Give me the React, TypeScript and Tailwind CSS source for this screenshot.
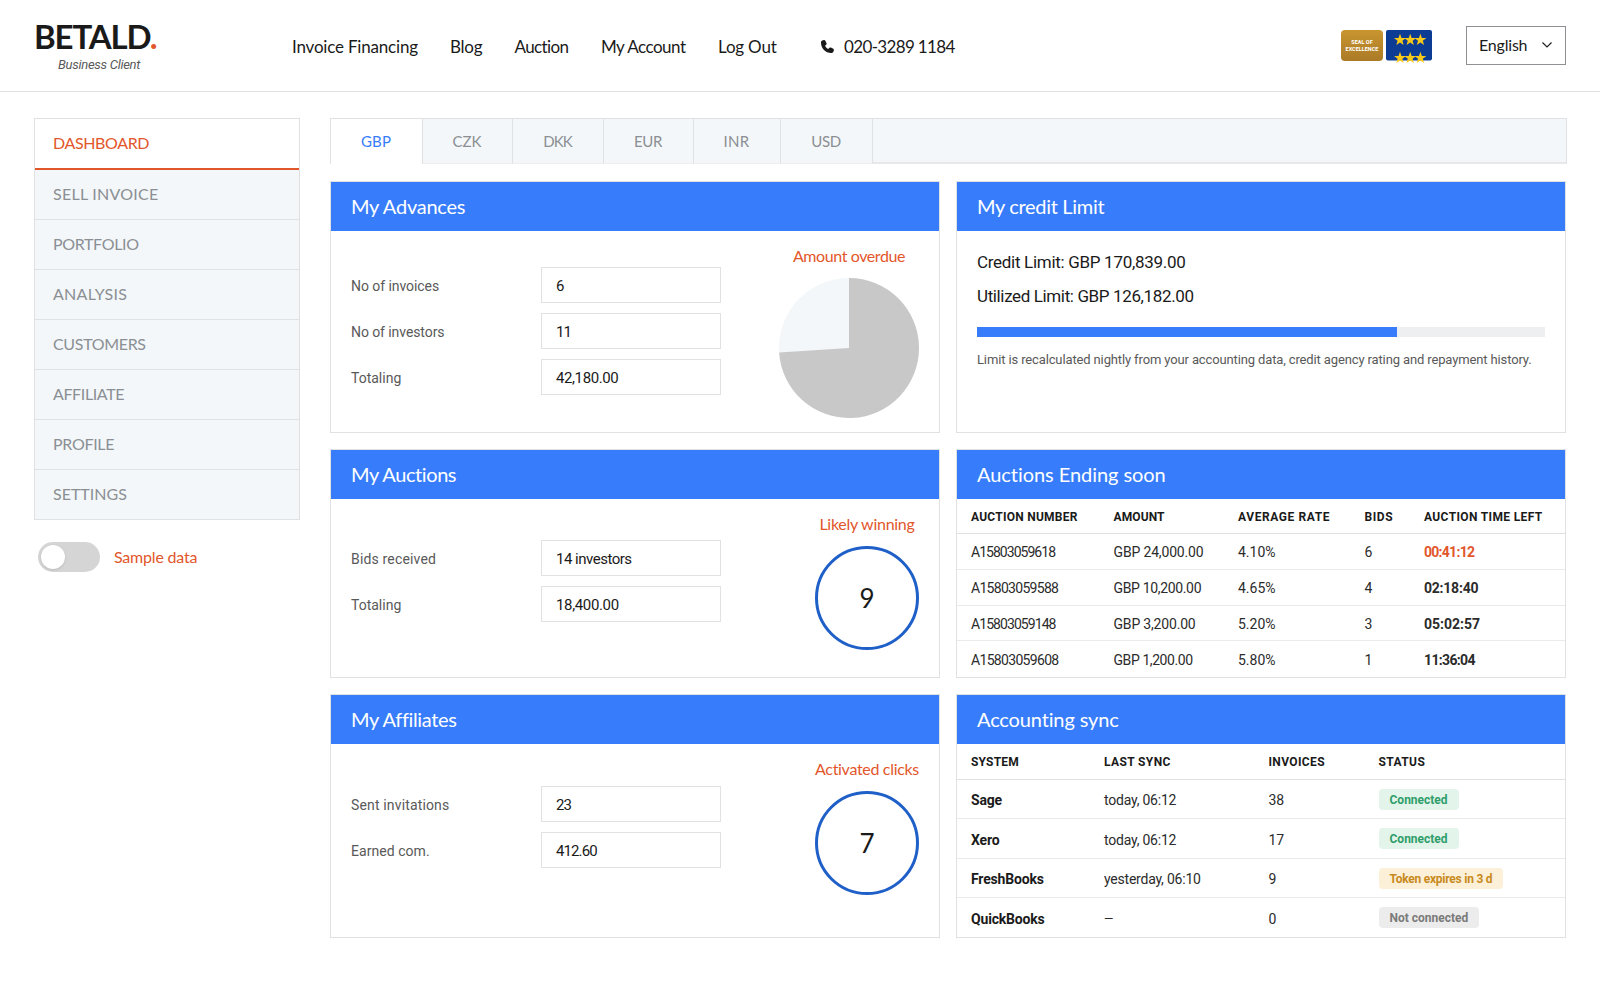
import type { ReactNode } from 'react';

const sans = 'font-[Lato,sans-serif]';

const nav = [
  { label: 'Invoice Financing', cls: 'w-[158px] tracking-[-0.19px]' },
  { label: 'Blog', cls: 'w-[64.5px] tracking-[-0.26px]' },
  { label: 'Auction', cls: 'w-[86.5px] tracking-[-0.6px]' },
  { label: 'My Account', cls: 'w-[117px] tracking-[-0.5px]' },
  { label: 'Log Out', cls: 'w-[103px] tracking-[-0.2px]' },
];

const menu = [
  { label: 'SELL INVOICE', cls: 'tracking-[0.25px]' },
  { label: 'PORTFOLIO', cls: 'tracking-[-0.35px]' },
  { label: 'ANALYSIS', cls: 'tracking-[0.27px]' },
  { label: 'CUSTOMERS', cls: 'tracking-[-0.33px]' },
  { label: 'AFFILIATE', cls: 'tracking-[-0.38px]' },
  { label: 'PROFILE', cls: 'tracking-[-0.3px]' },
  { label: 'SETTINGS', cls: 'tracking-[0px]' },
];

const tabs = [
  { label: 'CZK', cls: 'w-[90px] tracking-[0px]' },
  { label: 'DKK', cls: 'w-[91px] tracking-[-0.9px]' },
  { label: 'EUR', cls: 'w-[90px] tracking-[-0.3px]' },
  { label: 'INR', cls: 'w-[87px] tracking-[0.25px]' },
  { label: 'USD', cls: 'w-[92px] tracking-[-0.3px]' },
];

const auctions = [
  { id: 'A15803059618', idCls: 'tracking-[-0.97px]', amount: 'GBP 24,000.00', amountCls: 'tracking-[-0.16px]', rate: '4.10%', bids: '6', left: '00:41:12', leftCls: 'tracking-[-0.73px] text-[#e2562b]' },
  { id: 'A15803059588', idCls: 'tracking-[-0.7px]', amount: 'GBP 10,200.00', amountCls: 'tracking-[-0.34px]', rate: '4.65%', bids: '4', left: '02:18:40', leftCls: 'tracking-[-0.23px]' },
  { id: 'A15803059148', idCls: 'tracking-[-0.93px]', amount: 'GBP 3,200.00', amountCls: 'tracking-[-0.18px]', rate: '5.20%', bids: '3', left: '05:02:57', leftCls: 'tracking-[0px]' },
  { id: 'A15803059608', idCls: 'tracking-[-0.68px]', amount: 'GBP 1,200.00', amountCls: 'tracking-[-0.42px]', rate: '5.80%', bids: '1', left: '11:36:04', leftCls: 'tracking-[-0.65px]' },
];

const systems = [
  { name: 'Sage', sync: 'today, 06:12', syncCls: 'text-sm', invoices: '38', status: 'Connected', row: 'h-[39px]', cls: 'w-[80px] bg-[#e3f4ea] text-[#2f9e6b]' },
  { name: 'Xero', sync: 'today, 06:12', syncCls: 'text-sm', invoices: '17', status: 'Connected', row: 'h-[40px]', cls: 'w-[80px] bg-[#e3f4ea] text-[#2f9e6b]' },
  { name: 'FreshBooks', sync: 'yesterday, 06:10', syncCls: 'text-sm', invoices: '9', status: 'Token expires in 3 d', row: 'h-[39px]', cls: 'w-[124px] bg-[#fcf0d8] text-[#c88a1c] tracking-[-0.24px]' },
  { name: 'QuickBooks', sync: '—', syncCls: 'text-xs', invoices: '0', status: 'Not connected', row: 'h-[39px]', cls: 'w-[100px] bg-[#ececec] text-[#7a7a7a]' },
];

function Card({ title, titleCls, className, children }: { title: string; titleCls: string; className: string; children: ReactNode }) {
  return (
    <section className={`flex flex-col border border-[#dfe1e3] bg-white ${className}`}>
      <h2 className={`${sans} flex h-[49px] shrink-0 items-center bg-[#377dfb] pb-[2px] pl-5 text-xl text-white ${titleCls}`}>{title}</h2>
      {children}
    </section>
  );
}

function Field({ label, labelCls, value, valueCls }: { label: string; labelCls: string; value: string; valueCls: string }) {
  return (
    <div className="flex items-center">
      <span className={`w-[190px] pt-[2px] text-sm text-[#595959] ${labelCls}`}>{label}</span>
      <span className={`flex h-9 w-[180px] items-center border border-[#dfe1e3] pl-[14px] pt-[2px] text-[15px] text-[#1a1a1a] ${valueCls}`}>{value}</span>
    </div>
  );
}

function Metric({ title, titleCls, children }: { title: string; titleCls: string; children: ReactNode }) {
  return (
    <div className="flex flex-col items-center">
      <span className={`${sans} whitespace-nowrap text-base leading-6 text-[#e2562b] ${titleCls}`}>{title}</span>
      {children}
    </div>
  );
}

function Ring({ value }: { value: string }) {
  return (
    <div className={`${sans} mt-[10px] flex h-[104px] w-[104px] items-center justify-center rounded-full border-[3px] border-[#1f5fc8] text-[26px] text-[#1a1a1a]`}>{value}</div>
  );
}

function Stars() {
  return (
    <svg viewBox="0 0 46 33" className="h-[33px] w-[46px]">
      <rect width="46" height="30.5" rx="2" fill="#0c3c94" />
      {[10, 28].map((y) =>
        [14, 24.2, 34.4].map((x) => (
          <path
            key={`${x}-${y}`}
            transform={`translate(${x} ${y}) scale(1.05)`}
            d="M0-6 1.4-1.900 5.700-1.900 2.300.7 3.500 4.800 0 2.300-3.500 4.800-2.300.7-5.700-1.900-1.400-1.900Z"
            fill="#f7ca1a"
          />
        )),
      )}
    </svg>
  );
}

export default function App() {
  return (
    <div className="h-[1000px] overflow-hidden bg-white font-[Roboto,sans-serif] text-[#1a1a1a]">
      <header className="flex h-[92px] items-start border-b border-[#dfe1e3] pl-[34px] pr-[34px]">
        <div className="w-[258px] pt-4">
          <div className={`${sans} text-[33px] font-bold leading-10 tracking-[-1.15px]`}>
            BETALD<span className="text-[#e2562b]">.</span>
          </div>
          <div className="pl-[24px] pt-px text-[13px] italic leading-4 tracking-[-0.28px] text-[#595959]">Business Client</div>
        </div>
        <nav className={`${sans} flex pt-[34px] text-[17px] leading-[26px]`}>
          {nav.map((n) => (
            <a key={n.label} className={`whitespace-nowrap ${n.cls}`}>{n.label}</a>
          ))}
          <span className="flex items-center whitespace-nowrap tracking-[-0.65px]">
            <svg viewBox="0 0 24 24" className="mb-[2px] mr-[10px] h-[13px] w-[13px]" fill="#1a1a1a">
              <path d="M1.500 1.500C4 0 7-.5 8 1.200l2.200 4.800c.6 1.500 0 2.400-1.200 3.300L7.500 10.500c1.200 2.700 3.300 4.800 6 6l1.300-1.600c.9-1.100 2-1.600 3.400-1l4.600 2.100c1.500.8 1.200 4-.3 6.300-.8 1.300-2.200 1.700-3.700 1.700C8.500 24 0 15.500 0 5.200 0 3.700.2 2.300 1.500 1.500Z" />
            </svg>
            020-3289 1184
          </span>
        </nav>
        <div className="ml-auto flex">
          <div className="mt-[30px] flex h-[31px] w-[42px] flex-col items-center justify-center rounded-sm bg-gradient-to-b from-[#c8952f] to-[#ab7a26] text-center text-[5.5px] font-bold leading-[7px] text-white">
            <span>SEAL OF</span>
            <span>EXCELLENCE</span>
          </div>
          <div className="ml-[3px] mt-[30px]"><Stars /></div>
          <div className={`${sans} ml-[34px] mt-[26px] flex h-[39px] w-[100px] items-center justify-between border border-[#8f9194] pb-[2px] pl-3 pr-[13px] text-base tracking-[-0.2px]`}>
            English
            <svg viewBox="0 0 10 6" className="h-[6px] w-[10px]" fill="none" stroke="#1a1a1a" strokeWidth="1.1">
              <path d="m.5.5 4.500 4.500L9.500.5" />
            </svg>
          </div>
        </div>
      </header>

      <div className="flex pl-[34px] pt-[26px]">
        <aside className={`${sans} w-[266px]`}>
          <div className="flex flex-col border border-b-0 border-[#dfe1e3] text-base">
            <a className="flex h-[51px] items-center border-b-2 border-[#e2562b] pb-[2px] pl-[18px] tracking-[-0.37px] text-[#e2562b]">DASHBOARD</a>
            {menu.map((m) => (
              <a key={m.label} className={`flex h-[50px] items-center border-b border-[#dfe1e3] bg-[#f3f7fa] pb-[2px] pl-[18px] text-[#8b8f93] ${m.cls}`}>{m.label}</a>
            ))}
          </div>
          <div className="mt-[22px] flex items-center pl-1">
            <div className="flex h-[30px] w-[62px] items-center rounded-full bg-[#d5d5d5] pl-[3px]">
              <div className="h-6 w-6 rounded-full bg-white shadow-sm" />
            </div>
            <span className="ml-[14px] text-base tracking-[-0.2px] text-[#e2562b]">Sample data</span>
          </div>
        </aside>

        <main className="ml-[30px] w-[1237px]">
          <div className={`${sans} flex h-[46px] border border-b-0 border-[#dfe1e3] text-[15px] text-[#8b8f93]`}>
            <a className="flex w-[92px] items-center justify-center border-r border-[#dfe1e3] bg-white pr-px tracking-[0.15px] text-[#377dfb]">GBP</a>
            {tabs.map((t) => (
              <a key={t.label} className={`flex items-center justify-center border-b border-r border-[#dfe1e3] border-b-[#eceef0] bg-[#f3f7fa] pr-px ${t.cls}`}>{t.label}</a>
            ))}
            <div className="flex-1 border-b-2 border-[#e6e8ea] bg-[#f3f7fa]" />
          </div>

          <div className="mt-[17px] grid w-[1236px] grid-cols-2 gap-x-4">
            <Card title="My Advances" titleCls="tracking-[-0.25px]" className="h-[252px]">
              <div className="flex justify-between px-5 pt-[13px]">
                <div className="flex flex-col gap-[10px] pt-[23px]">
                  <Field label="No of invoices" labelCls="tracking-[-0.06px]" value="6" valueCls="" />
                  <Field label="No of investors" labelCls="tracking-[-0.08px]" value="11" valueCls="tracking-[-1px]" />
                  <Field label="Totaling" labelCls="" value="42,180.00" valueCls="tracking-[-0.4px]" />
                </div>
                <Metric title="Amount overdue" titleCls="tracking-[-0.4px]">
                  <svg viewBox="-70 -70 140 140" className="mt-[10px] h-[140px] w-[140px]">
                    <circle r="70" fill="#f3f7fa" />
                    <path d="M0 0V-70A70 70 0 1 1-69.860 4.400Z" fill="#c8c8c8" />
                  </svg>
                </Metric>
              </div>
            </Card>
            <Card title="My credit Limit" titleCls="tracking-[-0.32px]" className="h-[252px]">
              <div className="px-5 pt-[14px] text-[17px] leading-[34px]">
                <p className="tracking-[-0.3px]">Credit Limit: GBP 170,839.00</p>
                <p className="tracking-[-0.37px]">Utilized Limit: GBP 126,182.00</p>
                <div className="mt-[14px] h-[10px] bg-[#eeeff1]">
                  <div className="h-full w-[74%] bg-[#377dfb]" />
                </div>
                <p className="mt-[13px] whitespace-nowrap text-[13px] leading-5 tracking-[-0.13px] text-[#595959]">
                  Limit is recalculated nightly from your accounting data, credit agency rating and repayment history.
                </p>
              </div>
            </Card>

            <Card title="My Auctions" titleCls="tracking-[-0.42px]" className="mt-4 h-[229px]">
              <div className="flex justify-between px-5 pt-[13px]">
                <div className="flex flex-col gap-[10px] pt-7">
                  <Field label="Bids received" labelCls="tracking-[0.17px]" value="14 investors" valueCls="tracking-[-0.5px]" />
                  <Field label="Totaling" labelCls="" value="18,400.00" valueCls="tracking-[-0.35px]" />
                </div>
                <Metric title="Likely winning" titleCls="tracking-[-0.27px]"><Ring value="9" /></Metric>
              </div>
            </Card>
            <Card title="Auctions Ending soon" titleCls="tracking-[-0.06px]" className="mt-4 h-[229px]">
              <div className="grid h-[35px] shrink-0 grid-cols-[142.5px_124.5px_126.5px_59.5px_1fr] items-center border-b border-[#dfe1e3] pl-[14px] pt-[2px] text-xs font-bold">
                <span className="tracking-[0.25px]">AUCTION NUMBER</span>
                <span className="tracking-[0.1px]">AMOUNT</span>
                <span className="tracking-[0.6px]">AVERAGE RATE</span>
                <span className="tracking-[0.6px]">BIDS</span>
                <span className="tracking-[0.36px]">AUCTION TIME LEFT</span>
              </div>
              {auctions.map((a) => (
                <div key={a.id} className="grid h-9 grid-cols-[142.5px_124.5px_126.5px_59.5px_1fr] items-center border-b border-[#e8eaec] pl-[14px] pt-[2px] text-sm text-[#2b2b2b] last:border-b-0">
                  <span className={a.idCls}>{a.id}</span>
                  <span className={a.amountCls}>{a.amount}</span>
                  <span>{a.rate}</span>
                  <span>{a.bids}</span>
                  <span className={`font-bold ${a.leftCls}`}>{a.left}</span>
                </div>
              ))}
            </Card>

            <Card title="My Affiliates" titleCls="tracking-[-0.36px]" className="mt-4 h-[244px]">
              <div className="flex justify-between px-5 pt-[13px]">
                <div className="flex flex-col gap-[10px] pt-[29px]">
                  <Field label="Sent invitations" labelCls="tracking-[0.15px]" value="23" valueCls="tracking-[-1px]" />
                  <Field label="Earned com." labelCls="tracking-[0.05px]" value="412.60" valueCls="tracking-[-0.9px]" />
                </div>
                <Metric title="Activated clicks" titleCls="tracking-[-0.31px]"><Ring value="7" /></Metric>
              </div>
            </Card>
            <Card title="Accounting sync" titleCls="tracking-[-0.14px]" className="mt-4 h-[244px]">
              <div className="grid h-9 shrink-0 grid-cols-[133px_164.5px_110px_1fr] items-center border-b border-[#dfe1e3] pl-[14px] pt-px text-xs font-bold">
                <span className="tracking-[0.2px]">SYSTEM</span>
                <span className="tracking-[0.38px]">LAST SYNC</span>
                <span className="tracking-[0.36px]">INVOICES</span>
                <span className="tracking-[0.4px]">STATUS</span>
              </div>
              {systems.map((s) => (
                <div key={s.name} className={`grid ${s.row} grid-cols-[133px_164.5px_110px_1fr] items-center border-b border-[#e8eaec] pl-[14px] text-sm text-[#2b2b2b] last:border-b-0`}>
                  <span className="pt-[2px] font-bold tracking-[-0.18px] text-[#1a1a1a]">{s.name}</span>
                  <span className={`pt-[2px] tracking-[-0.22px] ${s.syncCls}`}>{s.sync}</span>
                  <span className="pt-[2px]">{s.invoices}</span>
                  <span className={`flex h-[21px] items-center whitespace-nowrap rounded-sm pl-[11px] pt-px text-xs font-bold ${s.cls}`}>{s.status}</span>
                </div>
              ))}
            </Card>
          </div>
        </main>
      </div>
    </div>
  );
}
